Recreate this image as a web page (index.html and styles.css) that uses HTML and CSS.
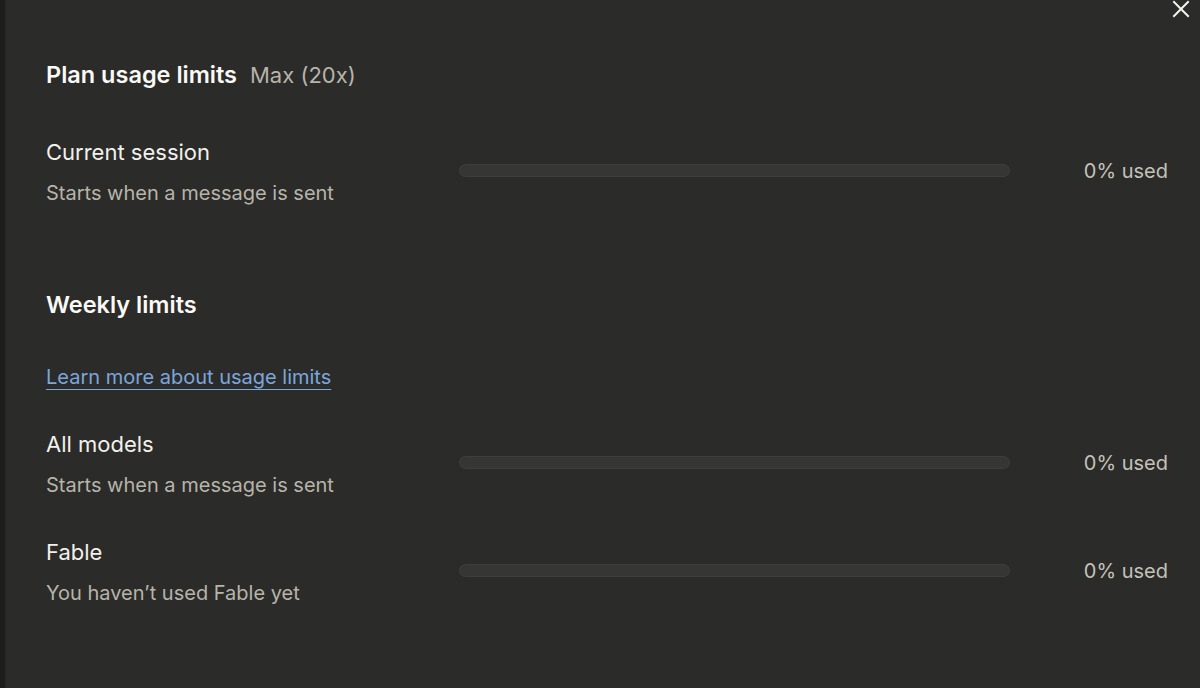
FILE: index.html
```html
<!DOCTYPE html>
<html lang="en">
<head>
    <meta charset="UTF-8">
    <meta name="viewport" content="width=device-width, initial-scale=1.0">
    <title>Usage</title>
    <link rel="stylesheet" href="styles.css">
</head>
<body>

    <div class="page">
        <div class="side-strip"></div>

        <div class="panel">
            <!-- Bouton de fermeture -->
            <button class="close-button" aria-label="Close">
                <svg width="18" height="18" viewBox="0 0 18 18" fill="none">
                    <path d="M2 2 L16 16 M16 2 L2 16" stroke="#f4f3ee" stroke-width="2" stroke-linecap="square"/>
                </svg>
            </button>

            <div class="section-title">
                Plan usage limits <span class="plan-name">Max (20x)</span>
            </div>

            <div class="usage-row first-row">
                <div class="usage-text">
                    <div class="usage-label">Current session</div>
                    <div class="usage-sub">Starts when a message is sent</div>
                </div>
                <div class="usage-bar"><div class="usage-fill" style="width: 0%"></div></div>
                <div class="usage-percent">0% used</div>
            </div>

            <div class="section-title weekly-title">Weekly limits</div>

            <a class="learn-link" href="#">Learn more about usage limits</a>

            <div class="usage-row">
                <div class="usage-text">
                    <div class="usage-label">All models</div>
                    <div class="usage-sub">Starts when a message is sent</div>
                </div>
                <div class="usage-bar"><div class="usage-fill" style="width: 0%"></div></div>
                <div class="usage-percent">0% used</div>
            </div>

            <div class="usage-row">
                <div class="usage-text">
                    <div class="usage-label">Fable</div>
                    <div class="usage-sub">You haven’t used Fable yet</div>
                </div>
                <div class="usage-bar"><div class="usage-fill" style="width: 0%"></div></div>
                <div class="usage-percent">0% used</div>
            </div>
        </div>
    </div>

</body>
</html>
```

FILE: styles.css
```css
/* Mise en page globale */
body {
    margin: 0;
    padding: 0;
    background-color: #1d1d1c;
    font-family: 'Inter', 'Lato', sans-serif;
    color: #f2f1ec;
}

.page {
    display: flex;
    height: 100vh;
}

.side-strip {
    width: 5px;
    background-color: #1d1d1c;
    border-right: 1px solid #262625;
}

.panel {
    position: relative;
    flex: 1;
    background-color: #2b2b29;
    padding: 59px 32px 0 40px;
    display: flex;
    flex-direction: column;
    align-items: flex-start;
}

.close-button {
    position: absolute;
    top: 0;
    right: 10px;
    background: none;
    border: none;
    padding: 0;
    cursor: pointer;
    line-height: 0;
}

.section-title {
    font-size: 23.5px;
    font-weight: 600;
    line-height: 32px;
    color: #faf9f5;
}

.plan-name {
    font-weight: 400;
    font-size: 22px;
    color: #b7b4aa;
    margin-left: 7px;
}

.weekly-title {
    margin-top: 82px;
}

.learn-link {
    margin-top: 42px;
    font-size: 20px;
    line-height: 28px;
    color: #7ca6dc;
    text-decoration: underline;
    text-decoration-thickness: 1px;
    text-underline-offset: 5px;
}

/* Une ligne : texte, barre, pourcentage */
.usage-row {
    width: 100%;
    display: grid;
    grid-template-columns: 413px 1fr 158px;
    align-items: center;
    margin-top: 39px;
}

.first-row {
    margin-top: 47px;
}

.usage-label {
    font-size: 22px;
    line-height: 28px;
    color: #f2f1ec;
}

.usage-sub {
    margin-top: 13px;
    font-size: 20px;
    line-height: 28px;
    color: #b7b4aa;
}

.usage-bar {
    height: 11px;
    margin-bottom: 4px;
    border-radius: 7px;
    background-color: #363634;
    border: 1px solid #3e3e3c;
    overflow: hidden;
}

.usage-fill {
    height: 100%;
    background-color: #7ca6dc;
}

.usage-percent {
    text-align: right;
    font-size: 20px;
    margin-bottom: 4px;
    color: #c4c2b9;
}
```
